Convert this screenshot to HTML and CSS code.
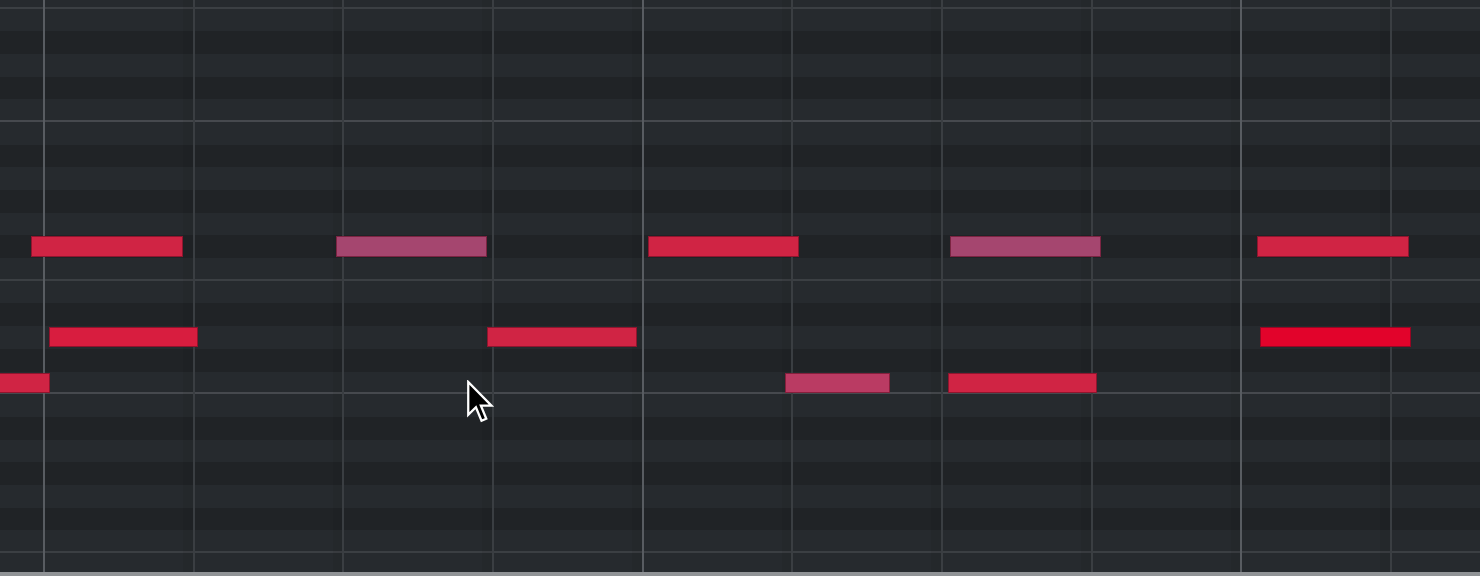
FILE: index.html
```html
<!DOCTYPE html>
<html lang="en">

<head>
    <meta charset="UTF-8">
    <meta name="viewport" content="width=device-width, initial-scale=1.0">
    <title>Piano Roll</title>
    <link rel="stylesheet" href="styles.css">
</head>

<body>
    <div class="roll">
        <!-- key lanes, top to bottom -->
        <div class="lanes">
            <div class="lane white top-cut f"></div>
            <div class="lane white"></div>
            <div class="lane black"></div>
            <div class="lane white"></div>
            <div class="lane black"></div>
            <div class="lane white c"></div>
            <div class="lane white"></div>
            <div class="lane black"></div>
            <div class="lane white"></div>
            <div class="lane black"></div>
            <div class="lane white"></div>
            <div class="lane black"></div>
            <div class="lane white f"></div>
            <div class="lane white"></div>
            <div class="lane black"></div>
            <div class="lane white"></div>
            <div class="lane black"></div>
            <div class="lane white c"></div>
            <div class="lane white"></div>
            <div class="lane black"></div>
            <div class="lane white"></div>
            <div class="lane black"></div>
            <div class="lane white"></div>
            <div class="lane black"></div>
            <div class="lane white f"></div>
            <div class="lane white"></div>
        </div>

        <!-- beat and bar lines -->
        <div class="beats"></div>

        <!-- notes -->
        <div class="note red" style="left: 31px; top: 236px; width: 152px;"></div>
        <div class="note pink" style="left: 336px; top: 236px; width: 151px;"></div>
        <div class="note red" style="left: 648px; top: 236px; width: 151px;"></div>
        <div class="note pink" style="left: 950px; top: 236px; width: 151px;"></div>
        <div class="note red" style="left: 1257px; top: 236px; width: 152px;"></div>

        <div class="note hot" style="left: 49px; top: 326.5px; width: 149px;"></div>
        <div class="note red" style="left: 487px; top: 326.5px; width: 150px;"></div>
        <div class="note loud" style="left: 1260px; top: 326.5px; width: 151px;"></div>

        <div class="note red" style="left: -2px; top: 372.5px; width: 52px;"></div>
        <div class="note rose" style="left: 785px; top: 372.5px; width: 105px;"></div>
        <div class="note red" style="left: 948px; top: 372.5px; width: 149px;"></div>

        <svg class="pointer" width="28" height="44" viewBox="0 0 13.5 20.5">
            <path d="M0.6 0.6 L0.6 16.4 L4.3 12.8 L7 19.3 L9.3 18.3 L6.7 12 L11.8 12 Z"
                fill="#000" stroke="#fff" stroke-width="1.1" stroke-linejoin="miter" />
        </svg>
    </div>
    <div class="hscroll"></div>
</body>

</html>
```

FILE: styles.css
```css
body {
    margin: 0;
    background-color: #1c1e21;
    overflow: hidden;
}

.roll {
    position: relative;
    height: 572px;
    overflow: hidden;
}

.lanes {
    display: flex;
    flex-direction: column;
}

.lane {
    flex: none;
    height: 22.7px;
    box-sizing: border-box;
}

.lane.top-cut {
    height: 8.5px;
}

.white {
    background: #262a2e;
}

.black {
    background: #202326;
}

/* E/F boundary */
.lane.f {
    border-bottom: 2px solid #3b3f43;
}

/* octave boundary under C */
.lane.c {
    border-bottom: 2px solid #46494e;
}

.beats {
    position: absolute;
    top: 0;
    left: 0;
    right: 0;
    bottom: 0;
    background-image:
        repeating-linear-gradient(to right, #585c61 0 2px, transparent 2px 598.6px),
        repeating-linear-gradient(to right, #3a3e42 0 2px, transparent 2px 149.65px),
        repeating-linear-gradient(to right, transparent 0 140px, rgba(0, 0, 0, 0.06) 140px 149.65px);
    background-position: 43px 0, 43px 0, 43px 0;
}

.note {
    position: absolute;
    height: 20.5px;
    box-sizing: border-box;
    border: 1px solid rgba(90, 10, 30, 0.55);
}

.red {
    background: #d02444;
}

.hot {
    background: #d81d3f;
}

.loud {
    background: #e2032b;
}

.pink {
    background: #a5466f;
}

.rose {
    background: #ba3b63;
}

.pointer {
    position: absolute;
    left: 467px;
    top: 380px;
}

.hscroll {
    height: 4px;
    background: #909396;
    border-top: 0;
}
```
